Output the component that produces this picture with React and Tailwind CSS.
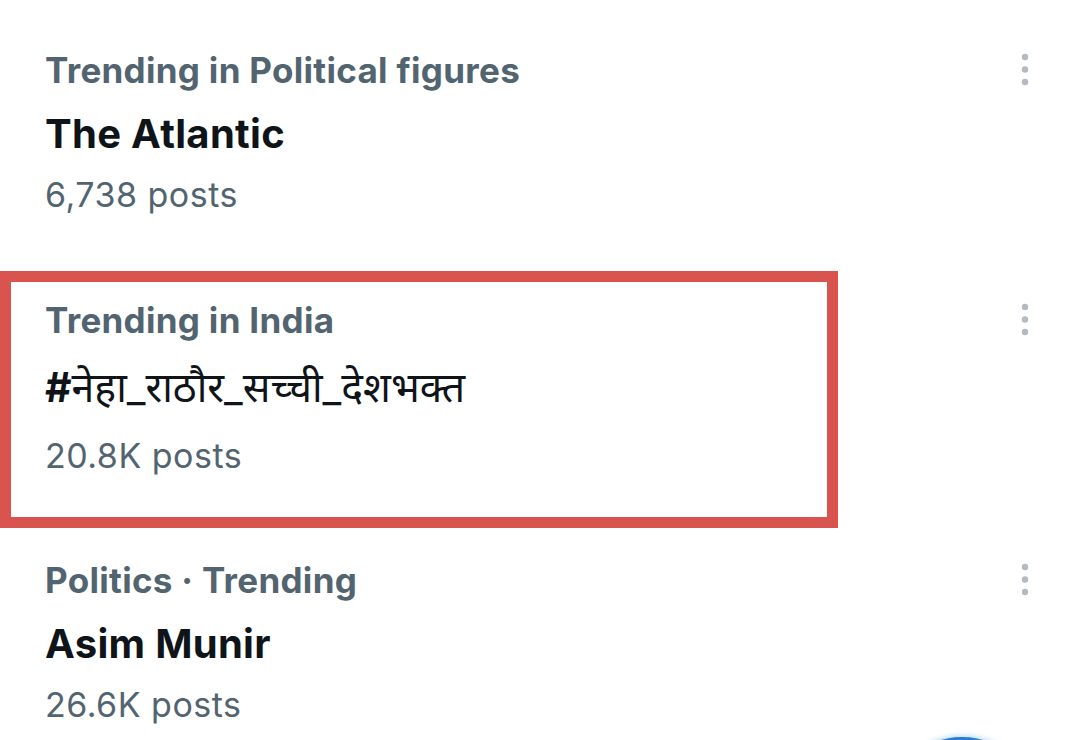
const font = {
  fontFamily: "Inter, 'Noto Sans', 'Noto Sans Devanagari', sans-serif",
};

function Dots() {
  return (
    <svg width="8" height="34" viewBox="0 0 8 34" className="block">
      <circle cx="4" cy="4" r="3.2" fill="#b3bac1" />
      <circle cx="4" cy="16.5" r="3.2" fill="#b3bac1" />
      <circle cx="4" cy="29" r="3.2" fill="#b3bac1" />
    </svg>
  );
}

const titleBold =
  "mt-[14px] text-[40px] leading-[56px] font-bold tracking-[0.3px] text-[#0f1419]";
const postsPlain = "mt-[11px] text-[34px] leading-[44px] tracking-[0.5px] text-[#536471]";

function TrendText({ label, title, posts, titleCls = titleBold, postsCls = postsPlain }) {
  return (
    <div>
      <p className="text-[35px] leading-[44px] font-bold tracking-[0.3px] text-[#536471]">
        {label}
      </p>
      <p className={titleCls}>{title}</p>
      <p className={postsCls}>{posts}</p>
    </div>
  );
}

export default function App() {
  return (
    <div className="relative h-[740px] w-full overflow-hidden bg-white" style={font}>
      <div className="flex flex-col">
        <div className="flex items-start pt-[48px]">
          <div className="w-[838px] pl-[45px]">
            <TrendText
              label="Trending in Political figures"
              title="The Atlantic"
              posts="6,738 posts"
            />
          </div>
          <div className="ml-auto mr-[50px] pt-[5px]">
            <Dots />
          </div>
        </div>

        <div className="mt-[54px] flex items-start">
          <div className="h-[257px] w-[838px] border-[11px] border-[#d9534f] pl-[34px] pt-[16px]">
            <TrendText
              label="Trending in India"
              title={
                <>
                  <span className="font-bold">#</span>नेहा_राठौर_सच्ची_देशभक्त
                </>
              }
              posts="20.8K posts"
              titleCls="mt-[17px] text-[41px] leading-[56px] text-[#0f1419]"
              postsCls="mt-[19px] text-[34px] leading-[44px] tracking-[0.5px] text-[#536471]"
            />
          </div>
          <div className="ml-auto mr-[50px] pt-[32px]">
            <Dots />
          </div>
        </div>

        <div className="mt-[30px] flex items-start">
          <div className="w-[838px] pl-[45px]">
            <TrendText label="Politics · Trending" title="Asim Munir" posts="26.6K posts" />
          </div>
          <div className="ml-auto mr-[50px] pt-[5px]">
            <Dots />
          </div>
        </div>
      </div>

      <div className="absolute left-[887px] top-[737px] h-[150px] w-[150px] rounded-full bg-[#2b7bd0] shadow-[0_0_6px_rgba(29,155,240,0.5)]" />
    </div>
  );
}
